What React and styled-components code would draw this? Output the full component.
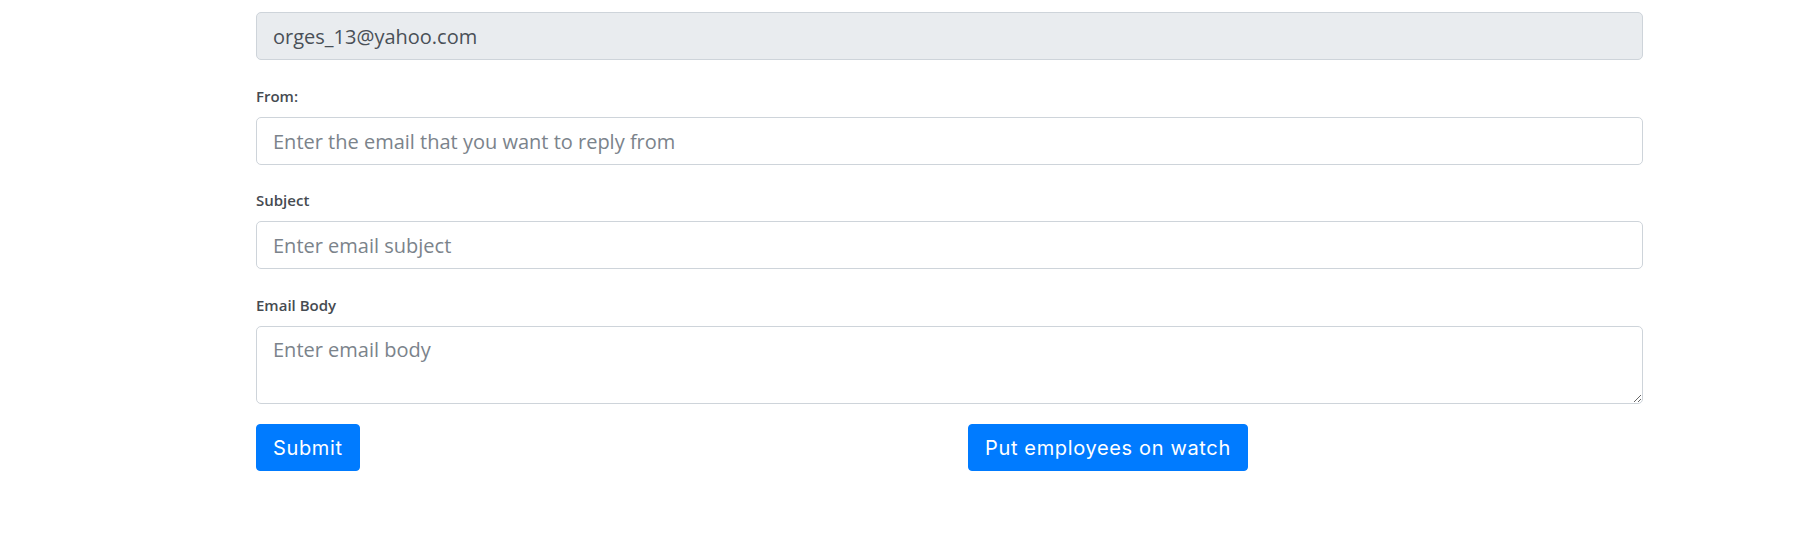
import React from "react";
import styled, { createGlobalStyle } from "styled-components";

const GlobalStyle = createGlobalStyle`
  * { box-sizing: border-box; }
  html, body { margin: 0; padding: 0; background: #fff; }
  body { font-family: "Open Sans", "Liberation Sans", sans-serif; }
`;

const Page = styled.div`
  padding: 12px 169px 40px 256px;
`;

const Form = styled.form`
  display: flex;
  flex-direction: column;
  width: 1387px;
`;

const Group = styled.div`
  display: flex;
  flex-direction: column;
  margin-bottom: ${(p) => p.$gap ?? 25}px;
`;

const Label = styled.label`
  font-family: "Open Sans", sans-serif;
  font-size: 15px;
  font-weight: 600;
  line-height: 22px;
  color: #464b51;
  margin-bottom: 10px;
`;

const fieldStyles = `
  display: block;
  width: 100%;
  font-family: "Open Sans", sans-serif;
  font-size: 20px;
  line-height: 30px;
  color: #495057;
  background: #fff;
  border: 1px solid #ced4da;
  border-radius: 5px;
  padding: 8px 16px;
  outline: none;
  &::placeholder { color: #7b838b; opacity: 1; }
`;

const Input = styled.input`
  ${fieldStyles}
  height: 48px;
  &:disabled { background: #e9ecef; color: #495057; -webkit-text-fill-color: #495057; opacity: 1; }
`;

const TextArea = styled.textarea`
  ${fieldStyles}
  height: 78px;
  resize: vertical;
`;

const Actions = styled.div`
  display: grid;
  grid-template-columns: 1fr 1fr;
  column-gap: 37px;
  align-items: start;
  margin-top: 20px;
`;

const Button = styled.button`
  justify-self: start;
  height: 47px;
  padding: 0 16px;
  border: 1px solid #007bff;
  border-radius: 4px;
  background: #007bff;
  color: #fff;
  font-family: Inter, "Liberation Sans", sans-serif;
  font-size: 20px;
  font-weight: 400;
  letter-spacing: 0.65px;
  cursor: pointer;
`;

export default function App() {
  return (
    <>
      <GlobalStyle />
      <Page>
        <Form onSubmit={(e) => e.preventDefault()}>
          <Group $gap={25}>
            <Input type="email" value="orges_13@yahoo.com" disabled readOnly />
          </Group>
          <Group $gap={24}>
            <Label>From:</Label>
            <Input type="email" placeholder="Enter the email that you want to reply from" />
          </Group>
          <Group $gap={25}>
            <Label>Subject</Label>
            <Input type="text" placeholder="Enter email subject" />
          </Group>
          <Group $gap={0}>
            <Label>Email Body</Label>
            <TextArea rows={2} placeholder="Enter email body" />
          </Group>
          <Actions>
            <Button type="submit">Submit</Button>
            <Button type="button">Put employees on watch</Button>
          </Actions>
        </Form>
      </Page>
    </>
  );
}
